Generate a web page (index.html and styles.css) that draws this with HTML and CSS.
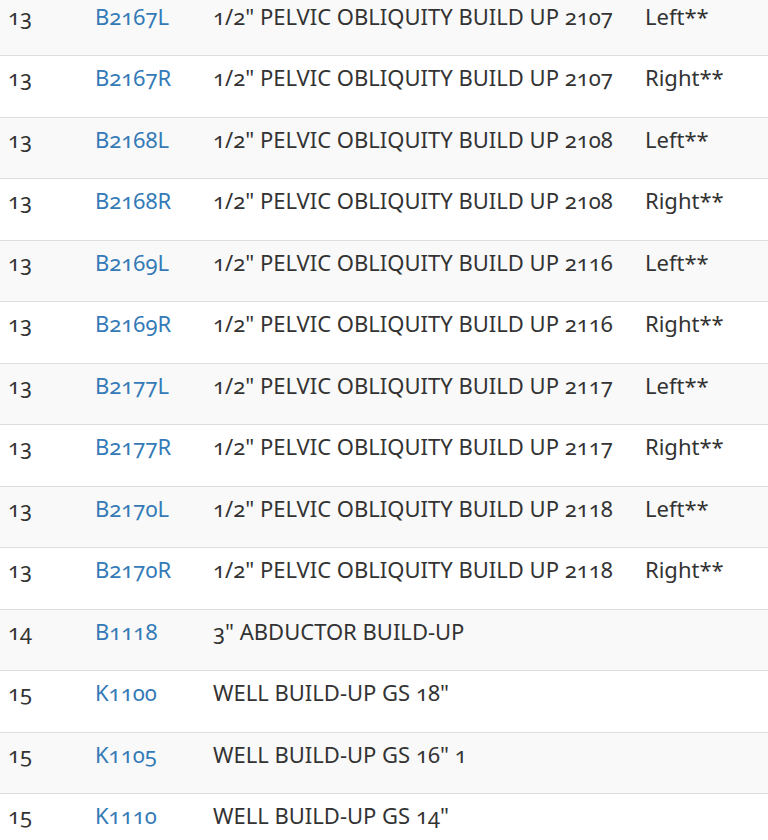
FILE: index.html
```html
<!DOCTYPE html>
<html>
<head>
<meta charset="utf-8">
<link rel="stylesheet" href="styles.css">
</head>
<body>
<div class="wrap">
<table class="parts">
<colgroup><col class="c1"><col class="c2"><col class="c3"><col class="c4"></colgroup>
<tbody>
<tr><td>13</td><td><a href="#">B2167L</a></td><td>1/2" PELVIC OBLIQUITY BUILD UP 2107</td><td>Left**</td></tr>
<tr><td>13</td><td><a href="#">B2167R</a></td><td>1/2" PELVIC OBLIQUITY BUILD UP 2107</td><td>Right**</td></tr>
<tr><td>13</td><td><a href="#">B2168L</a></td><td>1/2" PELVIC OBLIQUITY BUILD UP 2108</td><td>Left**</td></tr>
<tr><td>13</td><td><a href="#">B2168R</a></td><td>1/2" PELVIC OBLIQUITY BUILD UP 2108</td><td>Right**</td></tr>
<tr><td>13</td><td><a href="#">B2169L</a></td><td>1/2" PELVIC OBLIQUITY BUILD UP 2116</td><td>Left**</td></tr>
<tr><td>13</td><td><a href="#">B2169R</a></td><td>1/2" PELVIC OBLIQUITY BUILD UP 2116</td><td>Right**</td></tr>
<tr><td>13</td><td><a href="#">B2177L</a></td><td>1/2" PELVIC OBLIQUITY BUILD UP 2117</td><td>Left**</td></tr>
<tr><td>13</td><td><a href="#">B2177R</a></td><td>1/2" PELVIC OBLIQUITY BUILD UP 2117</td><td>Right**</td></tr>
<tr><td>13</td><td><a href="#">B2170L</a></td><td>1/2" PELVIC OBLIQUITY BUILD UP 2118</td><td>Left**</td></tr>
<tr><td>13</td><td><a href="#">B2170R</a></td><td>1/2" PELVIC OBLIQUITY BUILD UP 2118</td><td>Right**</td></tr>
<tr><td>14</td><td><a href="#">B1118</a></td><td>3" ABDUCTOR BUILD-UP</td><td></td></tr>
<tr><td>15</td><td><a href="#">K1100</a></td><td>WELL BUILD-UP GS 18"</td><td></td></tr>
<tr><td>15</td><td><a href="#">K1105</a></td><td>WELL BUILD-UP GS 16" 1</td><td></td></tr>
<tr><td>15</td><td><a href="#">K1110</a></td><td>WELL BUILD-UP GS 14"</td><td></td></tr>
</tbody>
</table>
</div>
</body>
</html>
```
FILE: styles.css
```css
html, body {
  margin: 0;
  padding: 0;
  background: #fff;
  overflow: hidden;
}
.wrap {
  margin-top: -6.5px;
}
.parts {
  width: 768px;
  border-collapse: collapse;
  table-layout: fixed;
  font-family: "Noto Sans", sans-serif;
  font-variant-numeric: oldstyle-nums;
  font-size: 22px;
  color: #333;
}
.c1 { width: 87px; }
.c2 { width: 118px; }
.c3 { width: 432px; }
.c4 { width: 131px; }
.parts tr {
  height: 61.5px;
}
.parts tbody tr:nth-child(odd) {
  background: #f9f9f9;
}
.parts td {
  border-top: 1px solid #ddd;
  padding: 7px 8px 0 8px;
  vertical-align: top;
  line-height: 28px;
  white-space: nowrap;
}
.parts a {
  color: #337ab7;
  text-decoration: none;
}
```
